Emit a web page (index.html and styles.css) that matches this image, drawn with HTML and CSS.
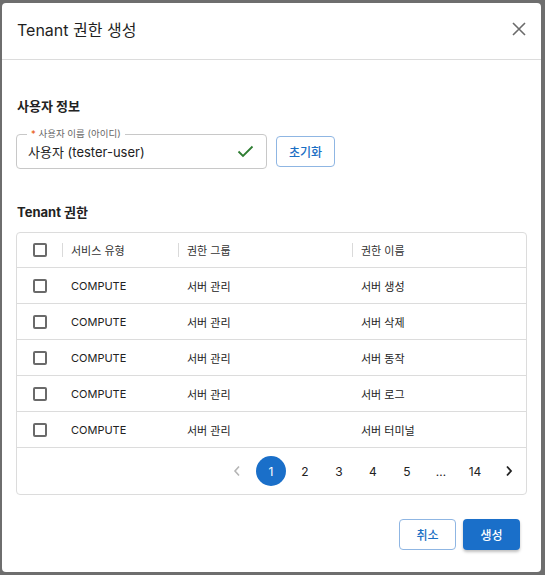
FILE: index.html
```html
<!DOCTYPE html>
<html lang="ko">
<head>
<meta charset="utf-8">
<link rel="stylesheet" href="styles.css">
</head>
<body>
<div class="dialog">
  <div class="dlg-header">
    <h1 class="dlg-title">Tenant 권한 생성</h1>
    <button class="close-btn" aria-label="닫기">
      <svg width="14" height="14" viewBox="0 0 14 14"><path d="M1 1L13 13M13 1L1 13" stroke="#6b6b6b" stroke-width="1.6" fill="none"/></svg>
    </button>
  </div>
  <div class="dlg-content">
    <h2 class="section-title">사용자 정보</h2>
    <div class="user-row">
      <div class="field">
        <span class="field-label"><span class="req">*</span> 사용자 이름 (아이디)</span>
        <span class="field-value">사용자 (tester-user)</span>
        <svg class="check" width="17" height="13" viewBox="0 0 17 13"><path d="M1.5 6.5L6 11L15.5 1.5" stroke="#2e7d32" stroke-width="1.8" fill="none"/></svg>
      </div>
      <button class="btn btn-outline btn-reset">초기화</button>
    </div>
    <h2 class="section-title second">Tenant 권한</h2>
    <div class="table">
      <div class="tr th">
        <div class="cell cb"><span class="checkbox"></span></div>
        <div class="cell"><span class="sep"></span>서비스 유형</div>
        <div class="cell"><span class="sep"></span>권한 그룹</div>
        <div class="cell"><span class="sep"></span>권한 이름</div>
      </div>
      <div class="tr">
        <div class="cell cb"><span class="checkbox"></span></div>
        <div class="cell">COMPUTE</div>
        <div class="cell">서버 관리</div>
        <div class="cell">서버 생성</div>
      </div>
      <div class="tr">
        <div class="cell cb"><span class="checkbox"></span></div>
        <div class="cell">COMPUTE</div>
        <div class="cell">서버 관리</div>
        <div class="cell">서버 삭제</div>
      </div>
      <div class="tr">
        <div class="cell cb"><span class="checkbox"></span></div>
        <div class="cell">COMPUTE</div>
        <div class="cell">서버 관리</div>
        <div class="cell">서버 동작</div>
      </div>
      <div class="tr">
        <div class="cell cb"><span class="checkbox"></span></div>
        <div class="cell">COMPUTE</div>
        <div class="cell">서버 관리</div>
        <div class="cell">서버 로그</div>
      </div>
      <div class="tr">
        <div class="cell cb"><span class="checkbox"></span></div>
        <div class="cell">COMPUTE</div>
        <div class="cell">서버 관리</div>
        <div class="cell">서버 터미널</div>
      </div>
      <div class="pager">
        <span class="pg arrow disabled"><svg width="8" height="12" viewBox="0 0 8 12"><path d="M6 1.5L2 6L6 10.5" stroke="#b5b5b5" stroke-width="1.6" fill="none"/></svg></span>
        <span class="pg active">1</span>
        <span class="pg">2</span>
        <span class="pg">3</span>
        <span class="pg">4</span>
        <span class="pg">5</span>
        <span class="pg">…</span>
        <span class="pg">14</span>
        <span class="pg arrow"><svg width="8" height="12" viewBox="0 0 8 12"><path d="M2 1.5L6 6L2 10.5" stroke="#222" stroke-width="1.8" fill="none"/></svg></span>
      </div>
    </div>
  </div>
  <div class="dlg-actions">
    <button class="btn btn-outline">취소</button>
    <button class="btn btn-primary">생성</button>
  </div>
</div>
</body>
</html>
```

FILE: styles.css
```css
* { box-sizing: border-box; }
html, body { margin: 0; padding: 0; }
body {
  background: #6e6e6e;
  font-family: "Inter", "Noto Sans CJK KR", sans-serif;
  color: #222;
  width: 545px;
  height: 575px;
  overflow: hidden;
}
.dialog {
  margin: 3px 0 0 2px;
  width: 539px;
  height: 569px;
  background: #fff;
  border-radius: 4px;
  display: flex;
  flex-direction: column;
}
.dlg-header {
  height: 57px;
  border-bottom: 1px solid #dcdcdc;
  display: flex;
  align-items: center;
  justify-content: space-between;
  padding: 0 14px 4px 15px;
}
.dlg-title {
  margin: 0;
  font-size: 16px;
  font-weight: 400;
  color: #1f1f1f;
}
.close-btn {
  border: 0;
  background: none;
  padding: 0;
  width: 16px;
  height: 16px;
  display: flex;
  align-items: center;
  justify-content: center;
}
.dlg-content {
  flex: 1;
  padding: 36px 14px 0 14px;
}
.section-title {
  margin: 0 0 18px 1px;
  font-size: 13px;
  font-weight: 700;
  line-height: 20px;
  color: #222;
}
.section-title.second { margin: 33px 0 10px 1px; }
.user-row {
  display: flex;
  align-items: center;
  gap: 9px;
}
.field {
  position: relative;
  width: 251px;
  height: 35px;
  border: 1px solid #c8c8c8;
  border-radius: 4px;
  display: flex;
  align-items: center;
  justify-content: space-between;
  padding: 0 12px 0 11px;
}
.field-label {
  position: absolute;
  top: -7px;
  left: 10px;
  background: #fff;
  padding: 0 4px;
  font-size: 9.5px;
  line-height: 12px;
  color: #666;
}
.req { color: #e8590c; }
.field-value { font-size: 13px; color: #222; }
.btn {
  font-family: inherit;
  font-size: 12px;
  font-weight: 500;
  height: 31px;
  width: 57px;
  border-radius: 4px;
  cursor: pointer;
}
.btn-outline {
  background: #fff;
  border: 1px solid #8fb6e3;
  color: #1a6fc4;
}
.btn-reset { width: 59px; }
.btn-primary {
  background: #1a6fc9;
  border: 0;
  color: #fff;
  box-shadow: 0 2px 3px rgba(0,0,0,0.25);
}
.table {
  border: 1px solid #dcdcdc;
  border-radius: 4px;
}
.tr {
  display: grid;
  grid-template-columns: 45px 116px 174px 1fr;
  height: 36px;
  border-bottom: 1px solid #dcdcdc;
  font-size: 11px;
  color: #222;
}
.th { height: 35px; }
.cell {
  display: flex;
  align-items: center;
  padding-left: 9px;
  position: relative;
}
.th .cell { color: #333; }
.cell.cb { padding-left: 16px; }
.sep {
  position: absolute;
  left: 0;
  top: 10px;
  width: 1px;
  height: 14px;
  background: #dadada;
}
.checkbox {
  width: 14px;
  height: 14px;
  border: 2px solid #6a6a6a;
  border-radius: 2px;
}
.pager {
  height: 46px;
  display: flex;
  justify-content: flex-end;
  align-items: center;
  gap: 4px;
  padding-right: 2px;
}
.pg {
  width: 30px;
  height: 30px;
  border-radius: 50%;
  display: flex;
  align-items: center;
  justify-content: center;
  font-size: 12px;
  color: #222;
}
.pg.active { background: #1a6fc9; color: #fff; }
.dlg-actions {
  display: flex;
  justify-content: flex-end;
  gap: 7px;
  padding: 0 21px 22px 0;
}
```
